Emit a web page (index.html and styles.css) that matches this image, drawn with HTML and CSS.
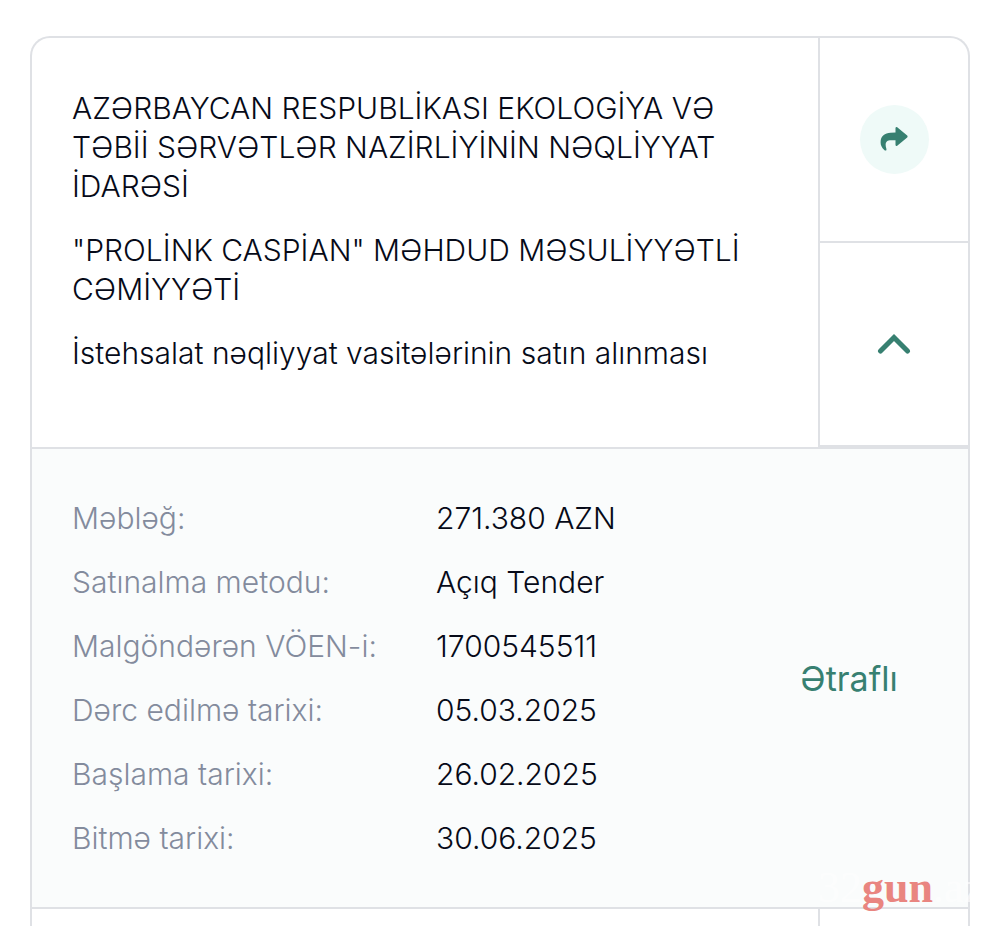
FILE: index.html
```html
<!DOCTYPE html>
<html lang="az">
  <head>
    <meta charset="utf-8">
    <meta name="viewport" content="width=device-width, initial-scale=1">
    <title>Satınalma müqavilələri</title>
    <link rel="stylesheet" href="styles.css">
  </head>
  <body>
    <main class="contracts">
      <article class="contract">
        <div class="summary">
          <div class="summary-text">
            <p>AZƏRBAYCAN RESPUBLİKASI EKOLOGİYA VƏ TƏBİİ SƏRVƏTLƏR NAZİRLİYİNİN NƏQLİYYAT İDARƏSİ</p>
            <p>"PROLİNK CASPİAN" MƏHDUD MƏSULİYYƏTLİ CƏMİYYƏTİ</p>
            <p>İstehsalat nəqliyyat vasitələrinin satın alınması</p>
          </div>
          <div class="actions">
            <div class="action">
              <button class="share" type="button" aria-label="Paylaş">
                <svg width="28" height="24" viewBox="0 0 28 24">
                  <path d="M15.500 1Q15.800-.5 17.200.3L27.200 8.600Q28 9.500 27.200 10.400L17.200 18.700Q15.800 19.400 15.500 18V13.200H11C6.500 13.200 4.500 15.500 6.300 21.500 6.900 23.500 5.500 24.200 4.300 23 1.700 20.500.6 18.300.6 15.200.6 9 5 6 10.500 5.800L15.500 5.600Z"/>
                </svg>
              </button>
            </div>
            <div class="action">
              <button class="toggle" type="button" aria-label="Bağla" aria-expanded="true">
                <svg width="34" height="22" viewBox="0 0 34 22">
                  <path d="M3.500 18 17 4.500 30.500 18"/>
                </svg>
              </button>
            </div>
          </div>
        </div>

        <div class="details">
          <dl>
            <dt>Məbləğ:</dt>
            <dd>271.380 AZN</dd>
            <dt>Satınalma metodu:</dt>
            <dd>Açıq Tender</dd>
            <dt>Malgöndərən VÖEN-i:</dt>
            <dd>1700545511</dd>
            <dt>Dərc edilmə tarixi:</dt>
            <dd>05.03.2025</dd>
            <dt>Başlama tarixi:</dt>
            <dd>26.02.2025</dd>
            <dt>Bitmə tarixi:</dt>
            <dd>30.06.2025</dd>
          </dl>
          <a class="more" href="#">Ətraflı</a>
          <span class="watermark">32<b>gun</b>.az</span>
        </div>
      </article>

      <article class="contract next">
        <div class="actions"></div>
      </article>
    </main>
  </body>
</html>
```
FILE: styles.css
```css
* {
    box-sizing: border-box;
}
body {
    margin: 0;
    font-family: Inter, sans-serif;
    font-size: 30px;
    font-weight: 300;
    line-height: 39px;
    color: #060a18;
    background: #fff;
}
p, dl, dd {
    margin: 0;
}
button {
    padding: 0;
    border: 0;
    background: none;
    color: #378071;
    cursor: pointer;
}
svg {
    display: block;
}

.contracts {
    display: flex;
    flex-direction: column;
    min-height: 100vh;
    padding: 36px 30px 0;
}
.contract {
    border: 2px solid #dfe1e5;
    border-bottom: 0;
}
.contract:first-child {
    border-radius: 20px 20px 0 0;
}

.summary {
    display: grid;
    grid-template-columns: 1fr 150px;
}
.summary-text {
    display: flex;
    flex-direction: column;
    gap: 25px;
    padding: 51px 40px 74px;
}
.actions {
    display: grid;
    grid-template-rows: 1fr 1fr;
    border-left: 2px solid #dfe1e5;
}
.action {
    display: flex;
    align-items: center;
    justify-content: center;
    border-bottom: 2px solid #dfe1e5;
}
.share {
    display: flex;
    align-items: center;
    justify-content: center;
    width: 69px;
    height: 69px;
    border-radius: 50%;
    background: #effaf8;
}
.share path {
    fill: currentColor;
}
.toggle path {
    fill: none;
    stroke: currentColor;
    stroke-width: 5;
    stroke-linecap: round;
}

.details {
    position: relative;
    display: grid;
    grid-template-columns: 1fr 238px;
    align-items: center;
    border-top: 2px solid #dfe1e5;
    background: #fafcfc;
}
.details dl {
    display: grid;
    grid-template-columns: 364px 1fr;
    row-gap: 25px;
    padding: 50px 0 49px 40px;
}
.details dt {
    color: #838b9d;
}
.more {
    justify-self: center;
    font-size: 34px;
    font-weight: 400;
    color: #378071;
    text-decoration: none;
}
/* site mark, lies over the lower right corner */
.watermark {
    position: absolute;
    right: -15px;
    bottom: 0;
    font-family: "Liberation Serif", serif;
    font-size: 44px;
    font-weight: 400;
    color: rgba(255, 255, 255, .6);
}
.watermark b {
    color: #e98580;
}

.next {
    display: grid;
    flex: 1;
    grid-template-columns: 1fr 150px;
}
.next .actions {
    grid-column: 2;
}
```
